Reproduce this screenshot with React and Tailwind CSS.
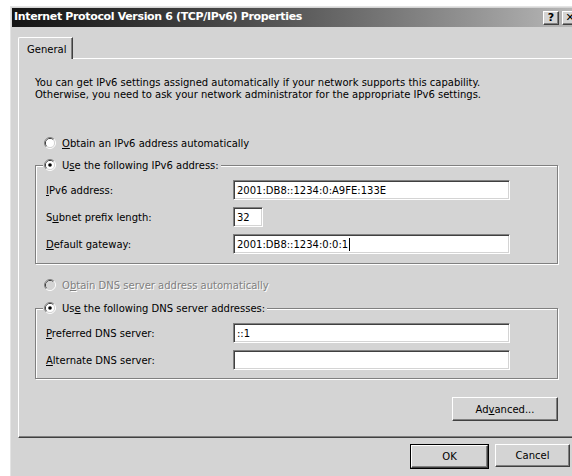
import React from "react";

// classic 3D edges
const raised =
  "border border-t-white border-l-white border-r-[#404040] border-b-[#404040] shadow-[inset_-1px_-1px_0_#808080]";
const sunken =
  "border border-t-[#808080] border-l-[#808080] border-r-white border-b-white shadow-[inset_1px_1px_0_#404040,inset_-1px_-1px_0_#d4d4d4]";
const etched =
  "border border-[#808080] shadow-[1px_1px_0_#fff,inset_1px_1px_0_#fff]";

function Radio({ checked, disabled }) {
  return (
    <svg width="12" height="12" viewBox="0 0 12 12" className="shrink-0">
      <path d="M2.11 9.89A5.5 5.5 0 0 1 9.89 2.11" fill="none" stroke="#808080" />
      <path d="M9.89 2.11A5.5 5.5 0 0 1 2.11 9.89" fill="none" stroke="#ffffff" />
      <path d="M2.82 9.18A4.5 4.5 0 0 1 9.18 2.82" fill="none" stroke="#404040" />
      <path d="M9.18 2.82A4.5 4.5 0 0 1 2.82 9.18" fill="none" stroke="#d4d4d4" />
      <circle cx="6" cy="6" r="4" fill={disabled ? "#d4d4d4" : "#ffffff"} />
      {checked && <circle cx="6" cy="6" r="1.8" fill="#000" />}
    </svg>
  );
}

function Option({ checked, disabled, children }) {
  return (
    <div className="flex items-center gap-[6px] h-[14px]">
      <Radio checked={checked} disabled={disabled} />
      <span
        className={
          disabled ? "text-[#808080] [text-shadow:1px_1px_0_#fff]" : ""
        }
      >
        {children}
      </span>
    </div>
  );
}

function Row({ label, width, children }) {
  return (
    <div className="flex items-center">
      <div className="w-[187px]">{label}</div>
      <div className={`h-[20px] bg-white flex items-center pl-[3px] ${sunken} ${width}`}>
        {children}
      </div>
    </div>
  );
}

function Button({ children, className = "" }) {
  return (
    <div
      className={`h-[23px] bg-[#d4d4d4] flex items-center justify-center ${raised} ${className}`}
    >
      {children}
    </div>
  );
}

function TitleButton({ children }) {
  return (
    <div
      className={`w-[16px] h-[14px] bg-[#d4d4d4] flex items-center justify-center text-[11px] font-bold leading-none text-black ${raised}`}
    >
      {children}
    </div>
  );
}

export default function App() {
  return (
    <div className="w-[572px] h-[476px] overflow-hidden bg-white pt-[6px] pl-[10px] font-['DejaVu_Sans',sans-serif] text-[10px] text-black">
      <div className="w-[573px] h-[480px] bg-[#d4d4d4] border-l border-t border-[#e4e4e4] pt-px">
        {/* title bar */}
        <div className="ml-px mr-[2px] h-[19px] flex items-center justify-between bg-gradient-to-r from-[#141414] via-[#5a5a5a] to-[#bababa]">
          <span className="pl-[2px] text-white text-[11px] font-bold tracking-[-0.35px]">
            Internet Protocol Version 6 (TCP/IPv6) Properties
          </span>
          <div className="flex gap-[3px] pr-[3px]">
            <TitleButton>?</TitleButton>
            <TitleButton>✕</TitleButton>
          </div>
        </div>

        {/* tabs */}
        <div className="pl-[7px] mt-[10px] flex">
          <div className="relative z-10 -mb-px w-[55px] h-[22px] bg-[#d4d4d4] border-t border-l border-white border-r border-r-[#404040] rounded-tl-[2px] shadow-[inset_-1px_0_0_#808080] pl-[8px] pt-[4px]">
            General
          </div>
        </div>

        {/* tab page */}
        <div className={`ml-[7px] w-[557px] h-[380px] px-[16px] ${raised}`}>
          <p className="mt-[18px] leading-[12px]">
            You can get IPv6 settings assigned automatically if your network supports this capability.
            <br />
            Otherwise, you need to ask your network administrator for the appropriate IPv6 settings.
          </p>

          <div className="mt-[35px] ml-[9px]">
            <Option>
              <u>O</u>btain an IPv6 address automatically
            </Option>
          </div>

          <fieldset className={`mt-[8px] pl-[10px] pt-[8px] pb-[9px] ${etched}`}>
            <legend className="-ml-[3px] pl-px pr-[2px] bg-[#d4d4d4]">
              <Option checked>
                U<u>s</u>e the following IPv6 address:
              </Option>
            </legend>
            <div className="flex flex-col gap-[7px]">
              <Row label={<><u>I</u>Pv6 address:</>} width="w-[277px]">
                2001:DB8::1234:0:A9FE:133E
              </Row>
              <Row label={<>S<u>u</u>bnet prefix length:</>} width="w-[30px]">
                32
              </Row>
              <Row label={<><u>D</u>efault gateway:</>} width="w-[277px]">
                2001:DB8::1234:0:0:1
                <span className="ml-px w-px h-[13px] bg-black" />
              </Row>
            </div>
          </fieldset>

          <div className="mt-[14px] ml-[9px]">
            <Option disabled>
              O<u>b</u>tain DNS server address automatically
            </Option>
          </div>

          <fieldset className={`mt-[9px] pl-[10px] pt-[8px] pb-[8px] ${etched}`}>
            <legend className="-ml-[3px] pl-px pr-[2px] bg-[#d4d4d4]">
              <Option checked>
                Us<u>e</u> the following DNS server addresses:
              </Option>
            </legend>
            <div className="flex flex-col gap-[7px]">
              <Row label={<><u>P</u>referred DNS server:</>} width="w-[277px]">
                ::1
              </Row>
              <Row label={<><u>A</u>lternate DNS server:</>} width="w-[277px]">
                {""}
              </Row>
            </div>
          </fieldset>

          <div className="mt-[18px] flex justify-end">
            <Button className="w-[106px] h-[24px]">
              Ad<u>v</u>anced...
            </Button>
          </div>
        </div>

        {/* dialog buttons */}
        <div className="mt-[6px] flex justify-end gap-[6px] pr-[13px]">
          <div className="border border-black">
            <Button className="w-[77px] h-[21px]">OK</Button>
          </div>
          <Button className="w-[75px]">Cancel</Button>
        </div>
      </div>
    </div>
  );
}
